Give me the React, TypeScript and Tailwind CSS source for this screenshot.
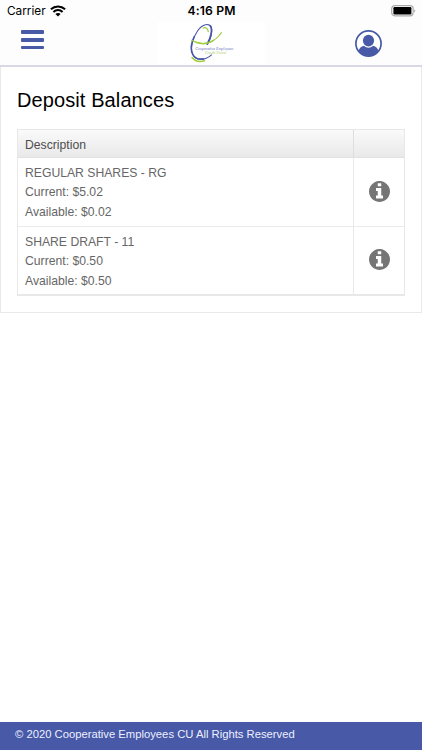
import clsx from "clsx";

const accounts = [
  { name: "REGULAR SHARES - RG", current: "$5.02", available: "$0.02" },
  { name: "SHARE DRAFT - 11", current: "$0.50", available: "$0.50" },
];

function WifiIcon() {
  return (
    <svg viewBox="0 0 16 12" className="w-4 h-3" fill="none" stroke="#000" strokeWidth="2">
      <path d="M0.9 4.3C4.9 0.5 11.1 0.5 15.1 4.3" />
      <path d="M3.4 6.9C6 4.5 10 4.5 12.6 6.9" />
      <path d="M8 11.4L5.4 8.9C6.9 7.6 9.1 7.6 10.6 8.9Z" fill="#000" stroke="none" />
    </svg>
  );
}

function BatteryIcon() {
  return (
    <svg viewBox="0 0 26 12" className="w-[26px] h-3">
      <rect x="1.7" y="0.6" width="21.4" height="10.2" rx="3" fill="#fff" stroke="#aaa" strokeWidth="1.2" />
      <rect x="3.4" y="2" width="18" height="7.4" rx="1.2" fill="#000" />
      <path d="M24.3 4.2C25.6 4.8 25.6 6.8 24.3 7.4Z" fill="#999" />
    </svg>
  );
}

function Logo() {
  return (
    <svg viewBox="0 0 56 42" className="w-14 h-[42px]" fill="none" strokeLinecap="round">
      <path d="M17.3 22.5C20.5 17.5 22.8 10 21.3 5.5C19.5 0.8 12.5 1.5 7.5 9C2 17 0.2 27 2.8 32.5C5.5 38.5 14 39.3 21.5 32.8" stroke="#4655a8" strokeWidth="1.1" />
      <path d="M4.3 14.5C0.8 22 0.5 28.5 2.8 32.5C4.8 36.3 9 37.6 13.5 36.8" stroke="#4655a8" strokeWidth="1.5" />
      <path d="M20.3 3.8C22.8 7 21.2 15 17.3 22" stroke="#4655a8" strokeWidth="1.7" />
      <path d="M1.5 18.3C13 25 25 20.5 31.5 10.5" stroke="#a1cc3c" strokeWidth="1.1" />
      <path d="M6 20.3C12 22.5 19 21.5 24 18" stroke="#a1cc3c" strokeWidth="1.5" />
      <path d="M13.2 6C16 5 17.8 6.3 18.2 9.5" stroke="#a1cc3c" strokeWidth="1.3" />
      <path d="M2 35.5C4.5 38.7 9 40.3 14.5 38.8" stroke="#a1cc3c" strokeWidth="1.5" />
      <text x="5.3" y="27.6" textLength="38" lengthAdjust="spacingAndGlyphs" fill="#5f6fba" stroke="none" fontSize="5" fontStyle="italic" fontFamily="Liberation Serif, serif">
        Cooperative Employees
      </text>
      <text x="15.3" y="31.9" textLength="21" lengthAdjust="spacingAndGlyphs" fill="#a9cc66" stroke="none" fontSize="4.6" fontStyle="italic" fontFamily="Liberation Serif, serif">
        Credit Union
      </text>
    </svg>
  );
}

function UserIcon() {
  return (
    <svg viewBox="0 0 27 27" className="w-[27px] h-[27px]">
      <circle cx="13.5" cy="13.5" r="12.6" fill="#fff" stroke="#4759a7" strokeWidth="1.7" />
      <path d="M3.6 20.8C4.4 18 6 16.5 8.9 15.8C11.5 18.4 15.5 18.4 18.1 15.8C21 16.5 22.6 18 23.4 20.8C18.6 27.7 8.4 27.7 3.6 20.8Z" fill="#4759a7" />
      <ellipse cx="13.5" cy="10.6" rx="5.6" ry="5.9" fill="#4759a7" />
    </svg>
  );
}

function InfoIcon() {
  return (
    <svg viewBox="0 128 1536 1536" className="mb-px w-[21px] h-[21px]" fill="#757575">
      <path d="M1024 1376v-160q0-14-9-23t-23-9h-96v-512q0-14-9-23t-23-9h-320q-14 0-23 9t-9 23v160q0 14 9 23t23 9h96v320h-96q-14 0-23 9t-9 23v160q0 14 9 23t23 9h448q14 0 23-9t9-23zm-128-896v-160q0-14-9-23t-23-9h-192q-14 0-23 9t-9 23v160q0 14 9 23t23 9h192q14 0 23-9t9-23zm640 416q0 209-103 385.5t-279.5 279.5-385.5 103-385.5-103-279.5-279.5-103-385.5 103-385.5 279.5-279.5 385.5-103 385.5 103 279.5 279.5 103 385.5z" />
    </svg>
  );
}

export default function App() {
  return (
    <main className="flex h-screen w-full flex-col overflow-hidden bg-white font-['Liberation_Sans',Arial,sans-serif]">
      {/* Status bar */}
      <div className="grid h-[22px] shrink-0 grid-cols-3 items-center bg-[#fdfdfd] pl-[7px] pr-[6px] font-['Inter',sans-serif] text-black">
        <div className="flex items-center gap-1 text-[11.8px]">
          <span className="pt-[2px]">Carrier</span>
          <WifiIcon />
        </div>
        <div className="text-center text-[12.2px] font-semibold tracking-[0.15px]">4:16 PM</div>
        <div className="flex justify-end">
          <BatteryIcon />
        </div>
      </div>

      {/* Header */}
      <header className="flex h-[45px] shrink-0 items-start border-b-2 border-[#d9d9e6] bg-[#fdfdfd] pl-[21px] pr-10">
        <button className="mt-2 flex w-[23px] flex-col gap-1" aria-label="Menu">
          <span className="h-[3.8px] w-full rounded-[1px] bg-[#4759a7]" />
          <span className="h-[3.8px] w-full rounded-[1px] bg-[#4759a7]" />
          <span className="h-[3.8px] w-full rounded-[1px] bg-[#4759a7]" />
        </button>
        <div className="ml-[113px] flex h-[42px] w-[108px] bg-white pl-[33px]">
          <Logo />
        </div>
        <button className="mt-2 ml-auto" aria-label="Profile">
          <UserIcon />
        </button>
      </header>

      {/* Balances */}
      <section className="h-[246px] shrink-0 border border-t-0 border-[#e9e9e9] px-4">
        <h1 className="pt-5 text-[20px] leading-[26px] tracking-[0.1px] text-black">Deposit Balances</h1>
        <div className="mt-4 border border-b-2 border-[#e8e8e8] text-[12.2px] text-[#666]">
          <div className="flex h-[28px] border-b border-[#e2e2e2] bg-linear-to-b from-[#fafafa] to-[#e9e9e9] text-[#4d4d4d]">
            <div className="flex flex-1 items-center pl-[7px] pt-[3px]">Description</div>
            <div className="w-[51px] border-l border-[#dedede]" />
          </div>
          {accounts.map((account, i) => (
            <div
              key={account.name}
              className={clsx("flex", i === 0 ? "h-[69px] border-b border-[#ebebeb]" : "h-[67px]")}
            >
              <div className="flex-1 pl-[7px] pt-[6px] leading-[19.4px]">
                <div>{account.name}</div>
                <div>Current: {account.current}</div>
                <div>Available: {account.available}</div>
              </div>
              <div className="flex w-[51px] items-center justify-center border-l border-[#e8e8e8] pb-px">
                <InfoIcon />
              </div>
            </div>
          ))}
        </div>
      </section>

      <footer className="mt-auto flex h-7 shrink-0 items-center bg-[#4759a7] pl-[15px] pb-[3px] text-[11.25px] text-[#edf0ff]">
        © 2020 Cooperative Employees CU All Rights Reserved
      </footer>
    </main>
  );
}
